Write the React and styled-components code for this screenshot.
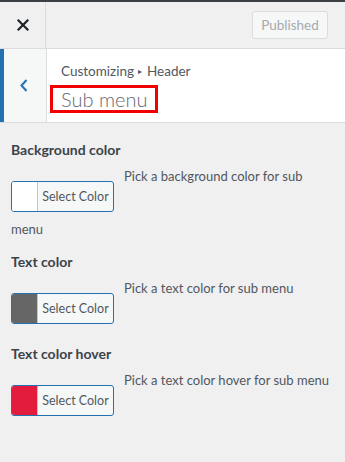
import React from "react";
import styled, { createGlobalStyle } from "styled-components";

const controls = [
  {
    title: "Background color",
    desc: "Pick a background color for sub menu",
    color: "#ffffff",
  },
  {
    title: "Text color",
    desc: "Pick a text color for sub menu",
    color: "#666666",
  },
  {
    title: "Text color hover",
    desc: "Pick a text color hover for sub menu",
    color: "#e31c3d",
  },
];

function App() {
  return (
    <>
      <GlobalStyle />
      <Panel>
        <TopBar>
          <CloseButton aria-label="Close">
            <svg width="12" height="12" viewBox="0 0 12 12">
              <path d="M1.5 1.5 L10.5 10.5 M10.5 1.5 L1.5 10.5" stroke="#1d2327" strokeWidth="2.2" strokeLinecap="square" />
            </svg>
          </CloseButton>
          <Spacer />
          <PublishButton disabled>Published</PublishButton>
        </TopBar>
        <SectionHead>
          <BackButton aria-label="Back">
            <svg width="8" height="13" viewBox="0 0 8 13">
              <path d="M6.5 1 L1.5 6.5 L6.5 12" fill="none" stroke="#2271b1" strokeWidth="2" />
            </svg>
          </BackButton>
          <HeadText>
            <Crumbs>
              Customizing<Arrow>▸</Arrow>Header
            </Crumbs>
            <SectionTitle>Sub menu</SectionTitle>
          </HeadText>
        </SectionHead>
        <Controls>
          {controls.map((c) => (
            <Control key={c.title}>
              <ControlTitle>{c.title}</ControlTitle>
              <ControlBody>
                <ColorButton>
                  <Swatch $color={c.color} />
                  <ButtonText>Select Color</ButtonText>
                </ColorButton>
                <Description>{c.desc}</Description>
              </ControlBody>
            </Control>
          ))}
        </Controls>
      </Panel>
    </>
  );
}

const GlobalStyle = createGlobalStyle`
  html, body {
    margin: 0;
    padding: 0;
    background: #f0f0f1;
  }
  body {
    font-family: Lato, "Liberation Sans", sans-serif;
  }
`;

const Panel = styled.div`
  width: 345px;
  min-height: 462px;
  background: #f0f0f1;
  border-top: 2px solid #3c3f44;
  box-sizing: border-box;
`;

const TopBar = styled.div`
  display: flex;
  align-items: center;
  height: 46px;
  border-bottom: 1px solid #dcdcde;
  background: #f0f0f1;
`;

const CloseButton = styled.div`
  width: 46px;
  height: 100%;
  border-right: 1px solid #dcdcde;
  display: flex;
  align-items: center;
  justify-content: center;
  box-sizing: border-box;
`;

const Spacer = styled.div`
  flex: 1;
`;

const PublishButton = styled.button`
  width: 76px;
  height: 28px;
  margin-right: 17px;
  background: #f6f7f7;
  border: 1px solid #dcdcde;
  border-radius: 3px;
  color: #a7aaad;
  font-family: Lato, "Liberation Sans", sans-serif;
  font-size: 13.5px;
  padding: 0;
`;

const SectionHead = styled.div`
  display: flex;
  background: #fff;
  border-bottom: 1px solid #dcdcde;
  height: 74px;
  box-sizing: border-box;
`;

const BackButton = styled.div`
  width: 47px;
  border-left: 4px solid #2271b1;
  border-right: 1px solid #dcdcde;
  background: #f6f7f7;
  box-sizing: border-box;
  display: flex;
  align-items: center;
  justify-content: center;
  padding-right: 2px;
`;

const HeadText = styled.div`
  display: flex;
  flex-direction: column;
  align-items: flex-start;
  padding: 12px 10px 0 14px;
`;

const Crumbs = styled.div`
  font-size: 13.5px;
  line-height: 20px;
  color: #50575e;
`;

const Arrow = styled.span`
  font-size: 8px;
  vertical-align: 2px;
  margin: 0 5px 0 4px;
`;

const SectionTitle = styled.div`
  margin: 4px 0 0 -11px;
  padding: 0 8px;
  border: 3px solid #f00000;
  font-size: 20px;
  font-weight: 300;
  line-height: 22px;
  color: #646970;
`;

const Controls = styled.div`
  padding: 17px 12px 0 11px;
`;

const Control = styled.div`
  margin-bottom: 13px;
`;

const ControlTitle = styled.div`
  font-size: 14px;
  font-weight: 700;
  line-height: 20px;
  color: #3c434a;
  margin-bottom: 6px;
`;

const ControlBody = styled.div`
  font-size: 13px;
  line-height: 20px;
  color: #50575e;
`;

const ColorButton = styled.span`
  display: inline-flex;
  vertical-align: top;
  width: 103px;
  height: 31px;
  margin: 15px 10px 7px 0;
  border: 1px solid #2271b1;
  border-radius: 3px;
  background: #f6f7f7;
  box-sizing: border-box;
  overflow: hidden;
`;

const Swatch = styled.span`
  flex: none;
  width: 25px;
  background: ${(p) => p.$color};
  border-right: 1px solid #c3c4c7;
`;

const ButtonText = styled.span`
  flex: 1;
  display: flex;
  align-items: center;
  justify-content: center;
  font-size: 12.5px;
  color: #50575e;
  white-space: nowrap;
`;

const Description = styled.span`
  vertical-align: top;
`;

export default App;
